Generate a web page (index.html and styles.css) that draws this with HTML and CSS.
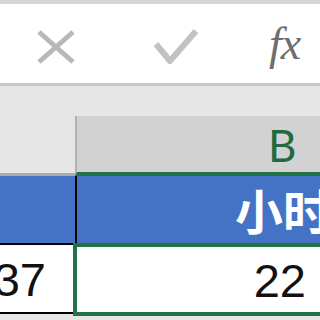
FILE: index.html
```html
<!DOCTYPE html>
<html>
<head>
<meta charset="utf-8">
<link rel="stylesheet" href="styles.css">
</head>
<body>
<div class="screen">
  <div class="ribbon-edge"></div>
  <div class="formula-bar">
    <svg class="icon icon-cancel" width="40" height="36" viewBox="0 0 40 36">
      <path d="M3 3 L37 33 M37 3 L3 33" stroke="#b8b8b8" stroke-width="5" fill="none" stroke-linecap="butt"/>
    </svg>
    <svg class="icon icon-enter" width="46" height="38" viewBox="0 0 46 38">
      <path d="M3 16 L17 33 L43 3" stroke="#c2c2c2" stroke-width="6" fill="none" stroke-linecap="butt" stroke-linejoin="round"/>
    </svg>
    <span class="fx">fx</span>
  </div>
  <div class="gap"></div>
  <div class="col-headers">
    <div class="corner"></div>
    <div class="col-head selected"><span class="col-letter">B</span></div>
  </div>
  <div class="row header-row">
    <div class="cell cell-a"></div>
    <div class="cell cell-b"><span class="title">小时</span></div>
  </div>
  <div class="row data-row">
    <div class="cell cell-a"><span class="num">37</span></div>
    <div class="cell cell-b"><span class="num">22</span></div>
  </div>
  <div class="selection"></div>
</div>
</body>
</html>
```
FILE: styles.css
```css
html, body {
  margin: 0;
  padding: 0;
  width: 320px;
  height: 320px;
  overflow: hidden;
  background: #e6e6e6;
}
.screen {
  position: relative;
  width: 320px;
  height: 320px;
  overflow: hidden;
  font-family: "Liberation Sans", Arial, sans-serif;
}
.ribbon-edge {
  height: 4px;
  background: #d6d6d6;
}
.formula-bar {
  height: 79px;
  background: #ffffff;
  border-bottom: 3px solid #c8c8c8;
  display: flex;
  align-items: center;
}
.icon { display: block; flex: none; }
.icon-cancel { margin-left: 36px; margin-top: 6px; }
.icon-enter { margin-left: 77px; margin-top: 6px; }
.fx {
  margin-left: 70px;
  font-family: "Liberation Serif", "Times New Roman", serif;
  font-style: italic;
  font-size: 46px;
  color: #6e6e6e;
  letter-spacing: -1px;
  line-height: 1;
  margin-top: 0px;
}
.gap { height: 30px; }
.col-headers {
  display: flex;
  height: 60px;
}
.corner {
  width: 75px;
  flex: none;
  border-bottom: 3px solid #acacac;
  box-sizing: border-box;
}
.col-head.selected {
  flex: 1;
  background: #d2d2d2;
  border-left: 2px solid #b1b1b1;
  border-bottom: 4px solid #217346;
  box-sizing: border-box;
  display: flex;
  align-items: flex-end;
}
.col-letter {
  font-family: "Lato", "Liberation Sans", sans-serif;
  color: #1e6b43;
  font-size: 44px;
  line-height: 1;
  margin-left: 191px;
  margin-bottom: 5px;
}
.row {
  display: flex;
}
.header-row {
  height: 69px;
  background: #4472c4;
}
.header-row .cell-a {
  width: 77px;
  flex: none;
  border-right: 2px solid #000;
  border-bottom: 2px solid #000;
  box-sizing: border-box;
}
.header-row .cell-b {
  flex: 1;
  display: flex;
  align-items: center;
  padding-left: 158px;
  padding-bottom: 4px;
}
.title {
  font-family: "Noto Sans CJK SC", sans-serif;
  font-weight: bold;
  font-size: 48px;
  color: #ffffff;
  line-height: 1;
  white-space: nowrap;
}
.data-row {
  height: 69px;
  background: #ffffff;
}
.data-row .cell-a {
  width: 75px;
  flex: none;
  border-bottom: 2px solid #000;
  box-sizing: border-box;
  display: flex;
  align-items: center;
  justify-content: flex-end;
  padding-right: 29px;
}
.data-row .cell-b {
  flex: 1;
  display: flex;
  align-items: center;
  justify-content: flex-end;
  padding-right: 14px;
}
.num {
  font-size: 47px;
  color: #111;
  line-height: 1;
  margin-top: 2px;
}
.selection {
  position: absolute;
  left: 73px;
  top: 243px;
  width: 300px;
  height: 73px;
  border: 4px solid #217346;
  box-sizing: border-box;
}
```
